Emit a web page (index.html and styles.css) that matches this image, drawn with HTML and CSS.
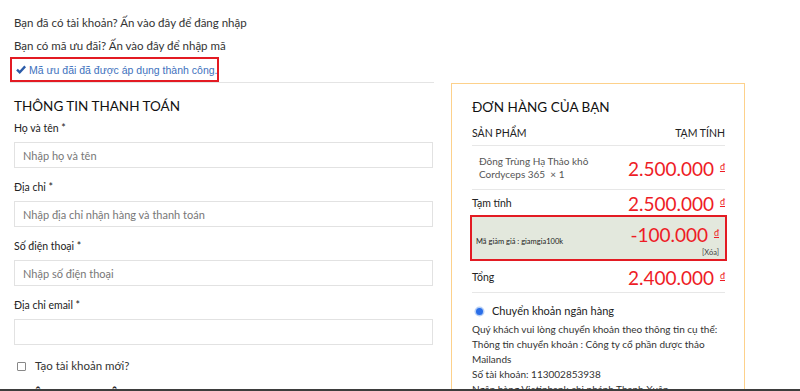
FILE: index.html
```html
<!DOCTYPE html>
<html>
<head>
  <meta charset="utf-8">
  <title>Thanh toán</title>
  <link rel="stylesheet" href="styles.css">
</head>
<body>
  <div class="notices">
    <div class="notice">Bạn đã có tài khoản? Ấn vào đây để đăng nhập</div>
    <div class="notice">Bạn có mã ưu đãi? Ấn vào đây để nhập mã</div>
    <div class="success">
      <svg class="check" width="10" height="9" viewBox="0 0 10 9"><path d="M1 4.6 L3.7 7.3 L9.2 1.4" fill="none" stroke="#2c5ca9" stroke-width="2.4"/></svg>
      <span>Mã ưu đãi đã được áp dụng thành công.</span>
    </div>
  </div>
  <div class="checkout">
    <form class="billing">
      <h3>THÔNG TIN THANH TOÁN</h3>
      <div class="field">
        <label>Họ và tên *</label>
        <input type="text" placeholder="Nhập họ và tên">
      </div>
      <div class="field">
        <label>Địa chỉ *</label>
        <input type="text" placeholder="Nhập địa chỉ nhận hàng và thanh toán">
      </div>
      <div class="field">
        <label>Số điện thoại *</label>
        <input type="text" placeholder="Nhập số điện thoại">
      </div>
      <div class="field">
        <label>Địa chỉ email *</label>
        <input type="text">
      </div>
      <div class="create">
        <span class="box"></span>
        <span>Tạo tài khoản mới?</span>
      </div>
      <h3 class="more">THÔNG TIN THÊM</h3>
    </form>
    <div class="order">
      <h3>ĐƠN HÀNG CỦA BẠN</h3>
      <div class="row head">
        <span>SẢN PHẨM</span>
        <span>TẠM TÍNH</span>
      </div>
      <div class="row item">
        <span class="name">Đông Trùng Hạ Thảo khô<br>Cordyceps 365 &nbsp;× 1</span>
        <span class="price">2.500.000 <u>đ</u></span>
      </div>
      <div class="row sub">
        <span>Tạm tính</span>
        <span class="price">2.500.000 <u>đ</u></span>
      </div>
      <div class="row coupon">
        <span class="code">Mã giảm giá : giamgia100k</span>
        <span class="amount">
          <span class="price">-100.000 <u>đ</u></span>
          <span class="remove">[Xóa]</span>
        </span>
      </div>
      <div class="row total">
        <span>Tổng</span>
        <span class="price">2.400.000 <u>đ</u></span>
      </div>
      <div class="method">
        <span class="radio"></span>
        <span>Chuyển khoản ngân hàng</span>
      </div>
      <div class="bank">
        Quý khách vui lòng chuyển khoản theo thông tin cụ thể:<br>
        Thông tin chuyển khoản : Công ty cổ phần dược thảo<br>
        Mailands<br>
        Số tài khoản: 113002853938<br>
        Ngân hàng Vietinbank chi nhánh Thanh Xuân
      </div>
    </div>
  </div>
  <div class="edge"></div>
</body>
</html>
```

FILE: styles.css
```css
body {
  margin: 0;
  background: #fff;
  font-family: Lato, "Open Sans", sans-serif;
  color: #222;
  overflow: hidden;
  height: 391px;
}
.notices {
  width: 424px;
  padding: 11px 0 0 10px;
}
.notice {
  font-size: 11.5px;
  line-height: 23px;
  padding-left: 4px;
  color: #333;
}
.success {
  display: flex;
  align-items: center;
  gap: 3px;
  box-sizing: border-box;
  width: 209px;
  height: 25px;
  padding-left: 4px;
  border: 2px solid #e31b23;
  white-space: nowrap;
  font-family: "Liberation Sans", Arial, sans-serif;
  font-size: 10.5px;
  color: #4071bd;
}
.check {
  flex-shrink: 0;
}
.notices::after {
  content: "";
  display: block;
  height: 1px;
  background: #e4e4e4;
}
.checkout {
  display: flex;
  gap: 18px;
  padding-left: 14px;
}
h3 {
  margin: 0;
  font-size: 13.5px;
  font-weight: normal;
  line-height: 20px;
  color: #111;
}
.billing {
  width: 419px;
  padding-top: 13px;
  margin: 0;
}
.billing h3 {
  margin-bottom: 4px;
}
.field {
  margin-bottom: 11px;
}
.field label {
  display: block;
  font-size: 10.5px;
  line-height: 16px;
  margin-bottom: 6px;
  color: #222;
}
.field input {
  display: block;
  box-sizing: border-box;
  width: 100%;
  height: 26px;
  border: 1px solid #e2e2e2;
  padding: 0 8px;
  font-family: inherit;
  font-size: 11px;
  outline: none;
}
.field input::placeholder {
  color: #777;
}
.create {
  display: flex;
  align-items: center;
  gap: 9px;
  padding-left: 3px;
  font-size: 11.5px;
  color: #333;
  line-height: 20px;
}
.box {
  width: 7px;
  height: 7px;
  border: 1px solid #888;
  border-radius: 1px;
}
.billing .more {
  margin-top: 8px;
  font-weight: bold;
}
.order {
  box-sizing: border-box;
  width: 294px;
  height: 320px;
  border: 1.5px solid #fdd18b;
  border-bottom: 0;
  padding: 13px 19px 0 20px;
}
.order h3 {
  margin-bottom: 4px;
}
.row {
  display: flex;
  justify-content: space-between;
  align-items: center;
  border-bottom: 1px solid #e7e7e7;
}
.head {
  height: 23px;
  font-size: 10.5px;
  padding-bottom: 1px;
}
.item {
  height: 43px;
}
.item .name {
  padding-left: 7px;
  font-size: 10px;
  line-height: 13px;
  color: #555;
}
.price {
  color: #ee1c26;
  font-size: 19px;
  line-height: 22px;
}
.price u {
  font-size: 9px;
  vertical-align: 6px;
  margin-left: 1px;
}
.sub {
  height: 25px;
  border-bottom: 0;
  font-size: 10.5px;
}
.coupon {
  height: 42px;
  margin: 0 -2px;
  padding: 0 6px 0 4px;
  background: #e3e8dd;
  border: 2px solid #e31b23;
}
.coupon .code {
  font-size: 7.5px;
  padding-top: 6px;
}
.amount {
  display: flex;
  flex-direction: column;
  align-items: flex-end;
  padding-top: 2px;
}
.remove {
  font-size: 7.5px;
  color: #444;
  margin-top: 2px;
}
.total {
  height: 31px;
  font-size: 10.5px;
}
.method {
  display: flex;
  align-items: center;
  gap: 9px;
  padding: 10px 0 0 4px;
  font-size: 11px;
  line-height: 16px;
}
.radio {
  width: 7px;
  height: 7px;
  border-radius: 50%;
  background: #2a6ee8;
  box-shadow: 0 0 0 1.5px #b7d0f7;
}
.bank {
  margin-top: 3px;
  font-size: 10px;
  line-height: 15px;
  color: #333;
}
.edge {
  position: fixed;
  left: 0;
  right: 0;
  bottom: 0;
  height: 2px;
  background: #3d3d3d;
}
```
